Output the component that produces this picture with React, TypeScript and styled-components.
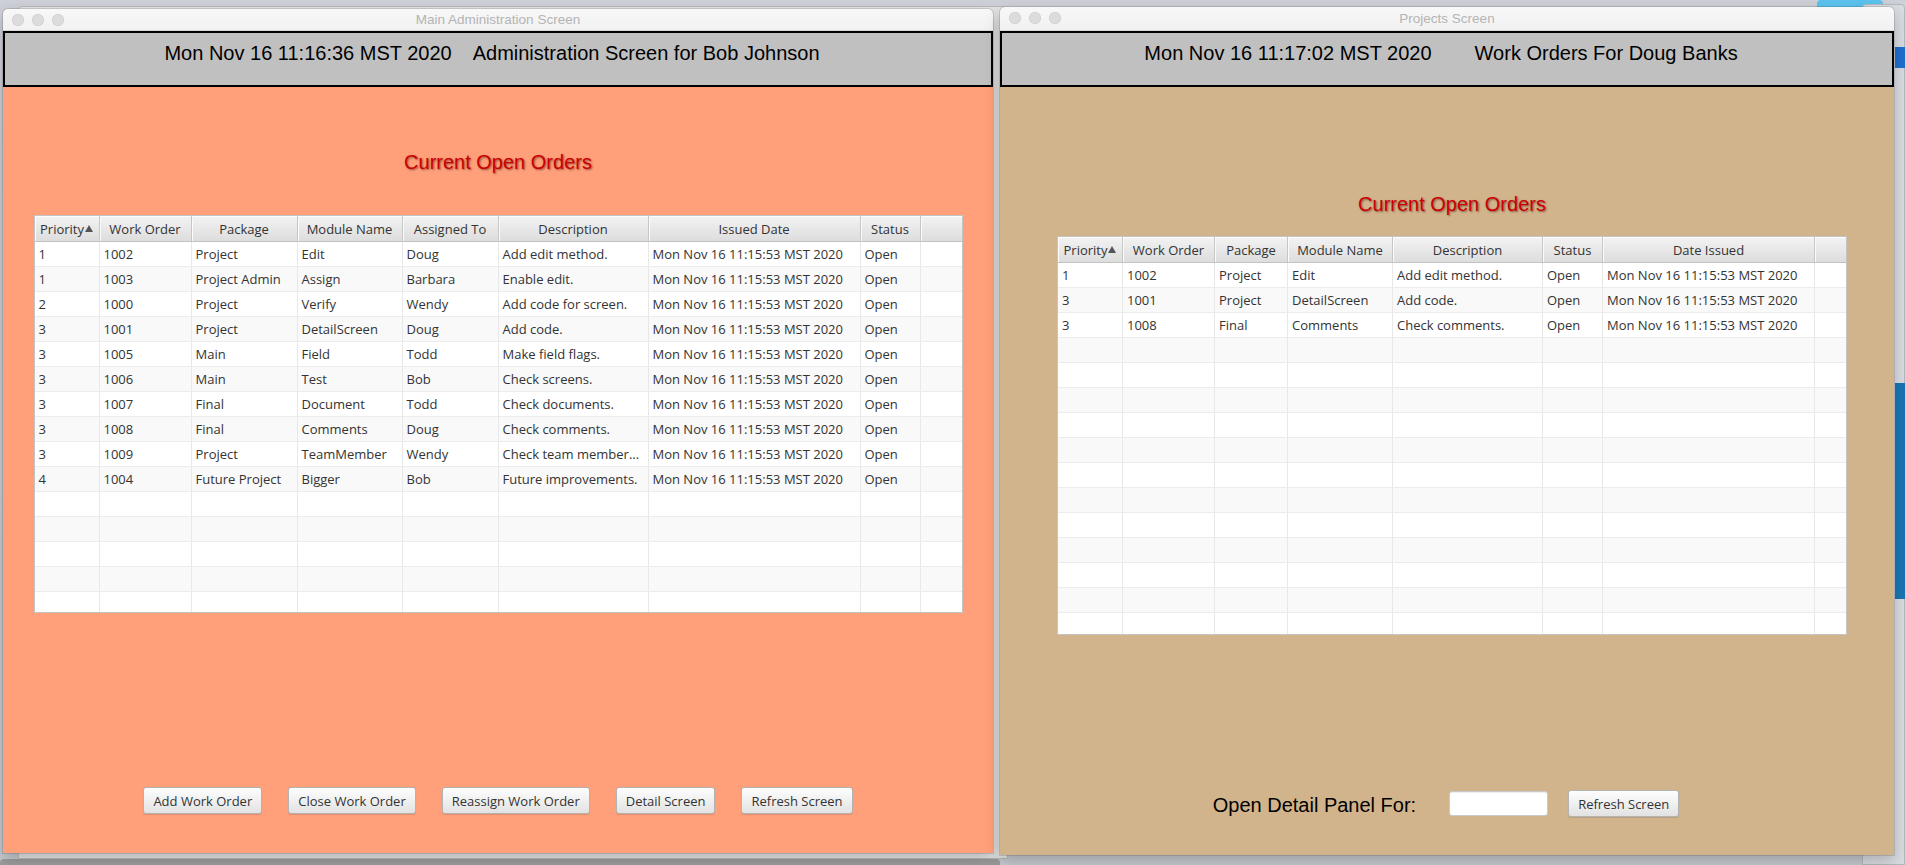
import React from "react";
import styled, { createGlobalStyle } from "styled-components";

const GlobalStyle = createGlobalStyle`
  html, body { margin: 0; padding: 0; }
  body {
    width: 1905px;
    height: 865px;
    overflow: hidden;
    background: #c9ccd3;
    font-family: "Open Sans", "DejaVu Sans", sans-serif;
  }
`;

const Desktop = styled.div`
  position: relative;
  width: 1905px;
  height: 865px;
  overflow: hidden;
  background: linear-gradient(to bottom, #cdd0d7 0%, #c6c9d0 100%);
`;

const Backdrop = styled.div<{ $l: number; $t: number; $w: number; $h: number; $bg: string; $edge?: string }>`
  position: absolute;
  left: ${(p) => p.$l}px;
  top: ${(p) => p.$t}px;
  width: ${(p) => p.$w}px;
  height: ${(p) => p.$h}px;
  background: ${(p) => p.$bg};
  box-sizing: border-box;
  border: ${(p) => (p.$edge ? `1px solid ${p.$edge}` : "none")};
  border-radius: 4px 4px 0 0;
`;

const Window = styled.div<{ $l: number; $t: number; $w: number; $h: number; $bg: string }>`
  position: absolute;
  left: ${(p) => p.$l}px;
  top: ${(p) => p.$t}px;
  width: ${(p) => p.$w}px;
  height: ${(p) => p.$h}px;
  background: ${(p) => p.$bg};
  border-radius: 5px 5px 0 0;
  box-shadow: 0 0 0 1px rgba(0, 0, 0, 0.12), 0 6px 16px rgba(0, 0, 0, 0.22);
  display: flex;
  flex-direction: column;
  overflow: hidden;
`;

const TitleBar = styled.div<{ $h: number }>`
  position: relative;
  flex: none;
  height: ${(p) => p.$h}px;
  box-sizing: border-box;
  background: linear-gradient(to bottom, #f8f8f8, #f1f1f1);
  border-bottom: 1px solid #d8d8d8;
  display: flex;
  align-items: center;
  justify-content: center;
  font-family: "Liberation Sans", Arial, sans-serif;
  font-size: 13.5px;
  color: #b4b4b4;
`;

const Lights = styled.div`
  position: absolute;
  left: 9px;
  top: 5px;
  display: flex;
  gap: 8px;
`;

const Light = styled.span`
  width: 12px;
  height: 12px;
  border-radius: 50%;
  background: #dcdcdc;
  box-shadow: inset 0 0 0 0.5px #cbcbcb;
`;

const Header = styled.div`
  flex: none;
  height: 56px;
  box-sizing: border-box;
  border: 2px solid #000;
  background: #c0c0c0;
  display: flex;
  justify-content: center;
  align-items: flex-start;
  padding: 9px 12px 0 0;
`;

const HeaderText = styled.div<{ $gap: number }>`
  display: flex;
  gap: ${(p) => p.$gap}px;
  font-family: "Liberation Sans", Arial, sans-serif;
  font-size: 20px;
  line-height: 23px;
  color: #000;
  white-space: nowrap;
`;

const Body = styled.div<{ $padTop: number; $padLeft: number; $padBottom: number }>`
  flex: 1;
  display: flex;
  flex-direction: column;
  align-items: center;
  padding: ${(p) => p.$padTop}px 0 ${(p) => p.$padBottom}px ${(p) => p.$padLeft}px;
`;

const Heading = styled.div<{ $gapBelow: number }>`
  font-family: "Liberation Sans", Arial, sans-serif;
  font-size: 20px;
  line-height: 23px;
  color: #cc0000;
  text-shadow: 1px 1px 2px rgba(60, 0, 0, 0.55);
  margin-bottom: ${(p) => p.$gapBelow}px;
`;

const TableBox = styled.div<{ $w: number; $h: number }>`
  flex: none;
  width: ${(p) => p.$w}px;
  height: ${(p) => p.$h}px;
  box-sizing: border-box;
  border: 1px solid #c4c4c4;
  background: #fff;
  overflow: hidden;
  font-size: 13px;
  color: #333;
`;

const HeadRow = styled.div<{ $cols: string }>`
  display: grid;
  grid-template-columns: ${(p) => p.$cols};
  height: 26px;
  box-sizing: border-box;
  border-bottom: 1px solid #c3c3c3;
`;

const HeadCell = styled.div`
  display: flex;
  align-items: center;
  justify-content: center;
  gap: 1px;
  background: linear-gradient(to bottom, #f3f3f3, #dddddd);
  border-right: 1px solid #c6c6c6;
  box-shadow: inset 1px 0 0 #fbfbfb, inset 0 1px 0 #fdfdfd;
  color: #333;
  white-space: nowrap;
  overflow: hidden;
  &:last-child { border-right: none; }
`;

const SortArrow = styled.span`
  display: inline-block;
  width: 0;
  height: 0;
  border-left: 4px solid transparent;
  border-right: 4px solid transparent;
  border-bottom: 7px solid #555;
  margin-top: -1px;
`;

const Row = styled.div<{ $cols: string; $alt: boolean }>`
  display: grid;
  grid-template-columns: ${(p) => p.$cols};
  height: 25px;
  box-sizing: border-box;
  border-bottom: 1px solid #ececec;
  background: ${(p) => (p.$alt ? "#f9f9f9" : "#ffffff")};
`;

const Cell = styled.div`
  display: flex;
  align-items: center;
  padding-left: 4px;
  border-right: 1px solid #e8e8e8;
  white-space: nowrap;
  overflow: hidden;
  &:last-child { border-right: none; }
`;

const ButtonBar = styled.div<{ $gap: number; $shift?: number }>`
  margin-top: auto;
  margin-right: ${(p) => p.$shift ?? 0}px;
  display: flex;
  align-items: center;
  gap: ${(p) => p.$gap}px;
`;

const Button = styled.button`
  height: 27px;
  padding: 0 9px;
  box-sizing: border-box;
  border: 1px solid #b3b3b3;
  border-radius: 3px;
  background: linear-gradient(to bottom, #fefefe, #e2e2e2);
  box-shadow: 0 1px 1px rgba(0, 0, 0, 0.12), inset 0 1px 0 #ffffff;
  font-family: "Open Sans", "DejaVu Sans", sans-serif;
  font-size: 13px;
  color: #333;
  white-space: nowrap;
`;

const FieldLabel = styled.span`
  font-family: "Liberation Sans", Arial, sans-serif;
  font-size: 20px;
  line-height: 23px;
  color: #000;
  margin: 3px 13px 0 0;
`;

const TextField = styled.div`
  width: 99px;
  height: 25px;
  box-sizing: border-box;
  background: #fff;
  border: 1px solid #c9c9c9;
  border-radius: 3px;
  box-shadow: inset 0 1px 1px rgba(0, 0, 0, 0.07);
`;

const SideChip = styled.div<{ $t: number; $h: number; $bg: string }>`
  position: absolute;
  left: 1895px;
  top: ${(p) => p.$t}px;
  width: 10px;
  height: ${(p) => p.$h}px;
  background: ${(p) => p.$bg};
`;

const DATE = "Mon Nov 16 11:15:53 MST 2020";

type Col = { title: string; w: number; sort?: boolean };

const leftCols: Col[] = [
  { title: "Priority", w: 65, sort: true },
  { title: "Work Order", w: 92 },
  { title: "Package", w: 106 },
  { title: "Module Name", w: 105 },
  { title: "Assigned To", w: 96 },
  { title: "Description", w: 150 },
  { title: "Issued Date", w: 212 },
  { title: "Status", w: 60 },
  { title: "", w: 41 },
];

const leftRows: string[][] = [
  ["1", "1002", "Project", "Edit", "Doug", "Add edit method.", DATE, "Open"],
  ["1", "1003", "Project Admin", "Assign", "Barbara", "Enable edit.", DATE, "Open"],
  ["2", "1000", "Project", "Verify", "Wendy", "Add code for screen.", DATE, "Open"],
  ["3", "1001", "Project", "DetailScreen", "Doug", "Add code.", DATE, "Open"],
  ["3", "1005", "Main", "Field", "Todd", "Make field flags.", DATE, "Open"],
  ["3", "1006", "Main", "Test", "Bob", "Check screens.", DATE, "Open"],
  ["3", "1007", "Final", "Document", "Todd", "Check documents.", DATE, "Open"],
  ["3", "1008", "Final", "Comments", "Doug", "Check comments.", DATE, "Open"],
  ["3", "1009", "Project", "TeamMember", "Wendy", "Check team member...", DATE, "Open"],
  ["4", "1004", "Future Project", "Bigger", "Bob", "Future improvements.", DATE, "Open"],
];

const rightCols: Col[] = [
  { title: "Priority", w: 65, sort: true },
  { title: "Work Order", w: 92 },
  { title: "Package", w: 73 },
  { title: "Module Name", w: 105 },
  { title: "Description", w: 150 },
  { title: "Status", w: 60 },
  { title: "Date Issued", w: 212 },
  { title: "", w: 31 },
];

const rightRows: string[][] = [
  ["1", "1002", "Project", "Edit", "Add edit method.", "Open", DATE],
  ["3", "1001", "Project", "DetailScreen", "Add code.", "Open", DATE],
  ["3", "1008", "Final", "Comments", "Check comments.", "Open", DATE],
];

function OrdersTable({ cols, rows, width, height, total }: { cols: Col[]; rows: string[][]; width: number; height: number; total: number }) {
  const template = cols.map((c) => `${c.w}px`).join(" ");
  const all = Array.from({ length: total }, (_, i) => rows[i] ?? []);
  return (
    <TableBox $w={width} $h={height}>
      <HeadRow $cols={template}>
        {cols.map((c, i) => (
          <HeadCell key={i}>
            {c.title}
            {c.sort && <SortArrow />}
          </HeadCell>
        ))}
      </HeadRow>
      {all.map((r, ri) => (
        <Row key={ri} $cols={template} $alt={ri % 2 === 1}>
          {cols.map((_, ci) => (
            <Cell key={ci}>{r[ci] ?? ""}</Cell>
          ))}
        </Row>
      ))}
    </TableBox>
  );
}

function TrafficLights() {
  return (
    <Lights>
      <Light />
      <Light />
      <Light />
    </Lights>
  );
}

export default function App() {
  return (
    <>
      <GlobalStyle />
      <Desktop>
        <Backdrop $l={18} $t={6} $w={990} $h={853} $bg="#e6e6e6" $edge="#b9b9b9" />
        <Backdrop $l={0} $t={859} $w={1000} $h={6} $bg="#9c9c9c" />
        <Backdrop $l={1817} $t={0} $w={66} $h={10} $bg="#5cc3ee" />
        <Backdrop $l={1862} $t={4} $w={43} $h={861} $bg="#d9dce1" $edge="#b5b8be" />
        <SideChip $t={47} $h={21} $bg="#1f6fd0" />
        <SideChip $t={383} $h={216} $bg="#1a76b4" />

        <Window $l={3} $t={9} $w={990} $h={844} $bg="#ffa07a">
          <TitleBar $h={22}>
            <TrafficLights />
            Main Administration Screen
          </TitleBar>
          <Header>
            <HeaderText $gap={21}>
              <span>Mon Nov 16 11:16:36 MST 2020</span>
              <span>Administration Screen for Bob Johnson</span>
            </HeaderText>
          </Header>
          <Body $padTop={64} $padLeft={0} $padBottom={39}>
            <Heading $gapBelow={41}>Current Open Orders</Heading>
            <OrdersTable cols={leftCols} rows={leftRows} width={929} height={398} total={16} />
            <ButtonBar $gap={26}>
              <Button>Add Work Order</Button>
              <Button>Close Work Order</Button>
              <Button>Reassign Work Order</Button>
              <Button>Detail Screen</Button>
              <Button>Refresh Screen</Button>
            </ButtonBar>
          </Body>
        </Window>

        <Window $l={1000} $t={7} $w={894} $h={848} $bg="#d2b48c">
          <TitleBar $h={24}>
            <TrafficLights />
            Projects Screen
          </TitleBar>
          <Header>
            <HeaderText $gap={43}>
              <span>Mon Nov 16 11:17:02 MST 2020</span>
              <span>Work Orders For Doug Banks</span>
            </HeaderText>
          </Header>
          <Body $padTop={106} $padLeft={10} $padBottom={38}>
            <Heading $gapBelow={20}>Current Open Orders</Heading>
            <OrdersTable cols={rightCols} rows={rightRows} width={790} height={399} total={16} />
            <ButtonBar $gap={20} $shift={12}>
              <FieldLabel>Open Detail Panel For:</FieldLabel>
              <TextField />
              <Button>Refresh Screen</Button>
            </ButtonBar>
          </Body>
        </Window>
      </Desktop>
    </>
  );
}
